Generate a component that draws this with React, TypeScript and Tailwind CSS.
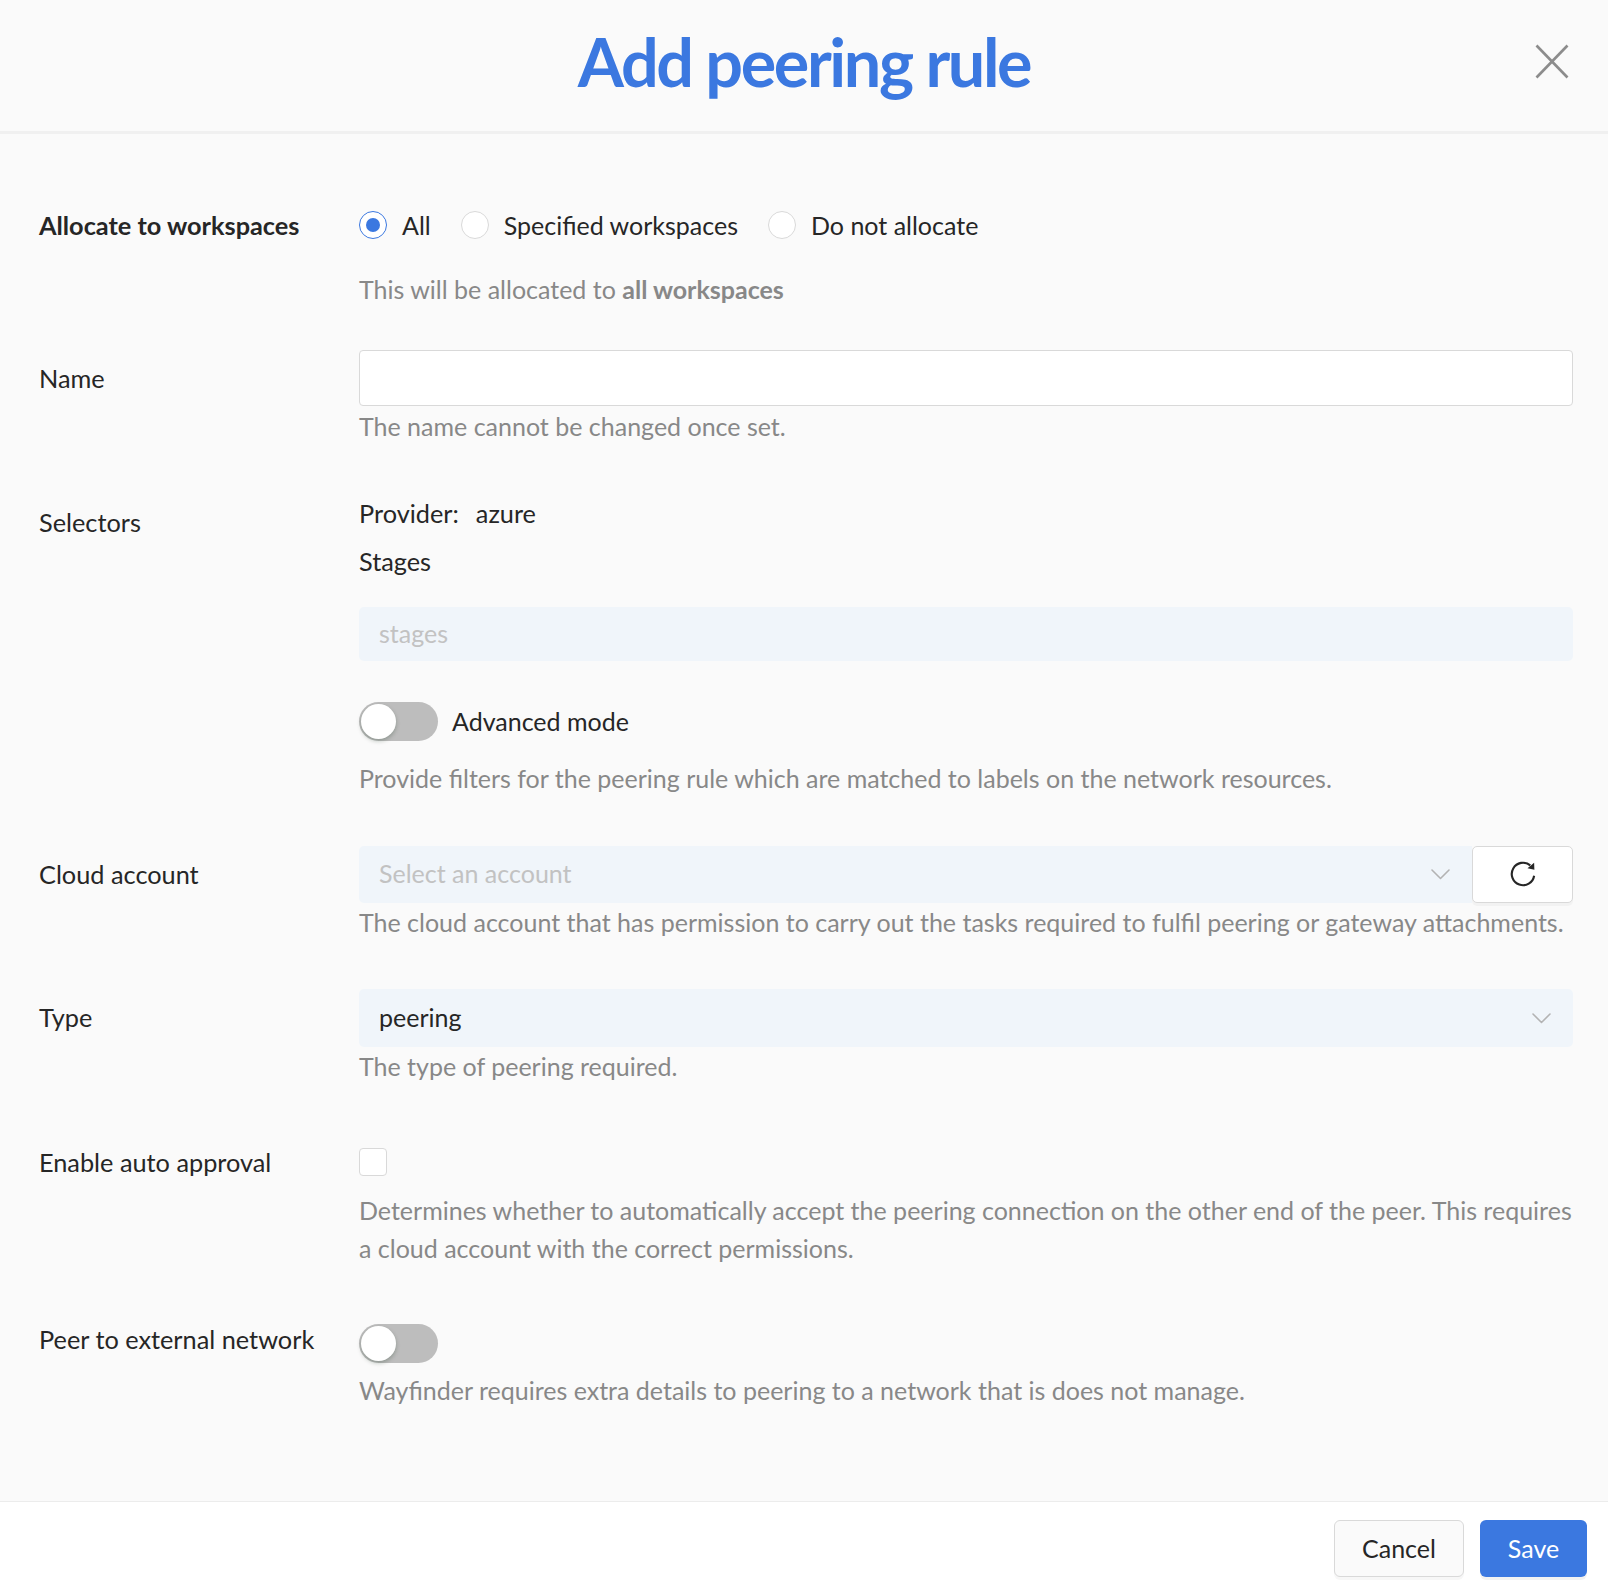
import React from "react";

function Radio({ checked, label }: { checked?: boolean; label: string }) {
  return (
    <label className="flex items-center mr-[30px]">
      <span
        className={
          checked
            ? "w-[28px] h-[28px] rounded-full border-[1.75px] border-[#3b78e0] bg-white flex items-center justify-center"
            : "w-[28px] h-[28px] rounded-full border-[1.75px] border-[#d9d9d9] bg-white flex items-center justify-center"
        }
      >
        {checked && <span className="w-[14px] h-[14px] rounded-full bg-[#3b78e0]" />}
      </span>
      <span className="ml-[15px] text-[25px] leading-[38.5px] text-[#262626]">{label}</span>
    </label>
  );
}

function Toggle() {
  return (
    <span className="relative block w-[79px] h-[39px] rounded-full bg-[#bdbdbd]">
      <span className="absolute left-[2px] top-[2px] w-[35px] h-[35px] rounded-full bg-white shadow-[0_2px_4px_rgba(0,35,11,0.25)]" />
    </span>
  );
}

function Chevron() {
  return (
    <svg width="19" height="11" viewBox="0 0 19 11" fill="none">
      <polyline points="1,1 9.5,9.5 18,1" stroke="#b3b3b3" strokeWidth="1.6" strokeLinejoin="round" strokeLinecap="round" />
    </svg>
  );
}

function Label({ children, bold, pt }: { children: React.ReactNode; bold?: boolean; pt?: string }) {
  return (
    <div
      className={
        (bold ? "font-bold " : "") +
        "w-[320px] shrink-0 text-[25.3px] leading-[38.5px] text-[#262626] " +
        (pt ?? "")
      }
    >
      {children}
    </div>
  );
}

function Help({ children, className }: { children: React.ReactNode; className?: string }) {
  return <div className={"text-[25px] leading-[38.5px] text-[#888888] " + (className ?? "")}>{children}</div>;
}

export default function App() {
  return (
    <div className="w-[1608px] h-[1588px] flex flex-col bg-[#fafafa] font-[family-name:Lato,sans-serif] text-[#262626]">
      <header className="h-[134px] shrink-0 border-b-[3px] border-[#f0f0f0] grid grid-cols-[1fr_auto_1fr] items-center pb-[8px] pl-[39px] pr-[39px]">
        <div />
        <h1 className="text-[66.5px] leading-none font-bold tracking-[-2.4px] text-[#3b78e0]">Add peering rule</h1>
        <div className="flex justify-end">
          <svg width="34" height="35" viewBox="0 0 34 35" fill="none">
            <line x1="1.5" y1="1.5" x2="32.5" y2="33.5" stroke="#8c8c8c" strokeWidth="2.6" />
            <line x1="32.5" y1="1.5" x2="1.5" y2="33.5" stroke="#8c8c8c" strokeWidth="2.6" />
          </svg>
        </div>
      </header>

      <main className="flex-1 pl-[39px] pr-[35px] pt-[72px]">
        {/* Allocate */}
        <div className="flex">
          <Label bold>Allocate to workspaces</Label>
          <div className="flex-1 min-w-0">
            <div className="h-[38.5px] flex items-center">
              <Radio checked label="All" />
              <Radio label="Specified workspaces" />
              <Radio label="Do not allocate" />
            </div>
            <Help className="mt-[25px]">
              This will be allocated to <span className="font-bold">all workspaces</span>
            </Help>
          </div>
        </div>

        {/* Name */}
        <div className="flex mt-[42px]">
          <Label pt="pt-[9px]">Name</Label>
          <div className="flex-1 min-w-0">
            <div className="h-[56px] bg-white border border-[#d9d9d9] rounded-[4px]" />
            <Help className="mt-[1px]">The name cannot be changed once set.</Help>
          </div>
        </div>

        {/* Selectors */}
        <div className="flex mt-[48px]">
          <Label pt="pt-[9px]">Selectors</Label>
          <div className="flex-1 min-w-0">
            <div className="text-[25.3px] leading-[38.5px] text-[#262626] flex">
              <span>Provider:</span>
              <span className="ml-[17px]">azure</span>
            </div>
            <div className="text-[25.3px] leading-[38.5px] text-[#262626] mt-[9.5px]">Stages</div>
            <div className="mt-[27px] h-[54px] rounded-[5px] bg-[#f0f5fa] flex items-center px-[20px] text-[25px] text-[#c2c2c2]">
              stages
            </div>
            <div className="mt-[41px] flex items-center">
              <Toggle />
              <span className="ml-[14px] text-[25px] leading-[38.5px] text-[#262626]">Advanced mode</span>
            </div>
            <Help className="mt-[18px]">
              Provide filters for the peering rule which are matched to labels on the network resources.
            </Help>
          </div>
        </div>

        {/* Cloud account */}
        <div className="flex mt-[48px]">
          <Label pt="pt-[9px]">Cloud account</Label>
          <div className="flex-1 min-w-0">
            <div className="flex">
              <div className="flex-1 h-[57px] rounded-l-[5px] bg-[#f0f5fa] flex items-center justify-between pl-[20px] pr-[22px] text-[25px] text-[#c2c2c2]">
                <span>Select an account</span>
                <Chevron />
              </div>
              <button className="w-[101px] h-[57px] bg-white border border-[#d9d9d9] rounded-[5px] flex items-center justify-center shadow-[0_3px_0_rgba(0,0,0,0.03)]">
                <svg width="30" height="30" viewBox="0 0 24 24" fill="none">
                  <path d="M17.8 5.1 A9 9 0 1 0 20.9 13.4" stroke="#262626" strokeWidth="1.7" fill="none" />
                  <path d="M20.9 2.9 L21.1 8.6 L15.6 7.4 Z" fill="#262626" />
                </svg>
              </button>
            </div>
            <Help>
              The cloud account that has permission to carry out the tasks required to fulfil peering or gateway attachments.
            </Help>
          </div>
        </div>

        {/* Type */}
        <div className="flex mt-[48px]">
          <Label pt="pt-[9px]">Type</Label>
          <div className="flex-1 min-w-0">
            <div className="h-[58px] rounded-[5px] bg-[#f0f5fa] flex items-center justify-between pl-[20px] pr-[22px] text-[25px] text-[#262626]">
              <span>peering</span>
              <Chevron />
            </div>
            <Help>The type of peering required.</Help>
          </div>
        </div>

        {/* Enable auto approval */}
        <div className="flex mt-[57px]">
          <Label>Enable auto approval</Label>
          <div className="flex-1 min-w-0">
            <div className="h-[38.5px] flex items-center">
              <span className="w-[28px] h-[28px] rounded-[4px] border-[1.5px] border-[#d9d9d9] bg-white" />
            </div>
            <div className="mt-[10px] text-[25px] leading-[38px] text-[#888888]">
              Determines whether to automatically accept the peering connection on the other end of the peer. This requires
              a cloud account with the correct permissions.
            </div>
          </div>
        </div>

        {/* Peer to external network */}
        <div className="flex mt-[53px]">
          <Label>Peer to external network</Label>
          <div className="flex-1 min-w-0">
            <div className="mt-[4px]">
              <Toggle />
            </div>
            <Help className="mt-[8px]">Wayfinder requires extra details to peering to a network that is does not manage.</Help>
          </div>
        </div>
      </main>

      <footer className="h-[87px] shrink-0 bg-white border-t border-[#ececec] flex justify-end items-start pt-[18px] pr-[21px] gap-[16px]">
        <button className="w-[130px] h-[57px] rounded-[6px] bg-[#fafafa] border border-[#d9d9d9] text-[25px] text-[#262626] shadow-[0_3px_0_rgba(0,0,0,0.03)]">
          Cancel
        </button>
        <button className="w-[107px] h-[57px] rounded-[6px] bg-[#3b78e0] text-[25px] text-white shadow-[0_3px_0_rgba(0,0,0,0.05)]">
          Save
        </button>
      </footer>
    </div>
  );
}
